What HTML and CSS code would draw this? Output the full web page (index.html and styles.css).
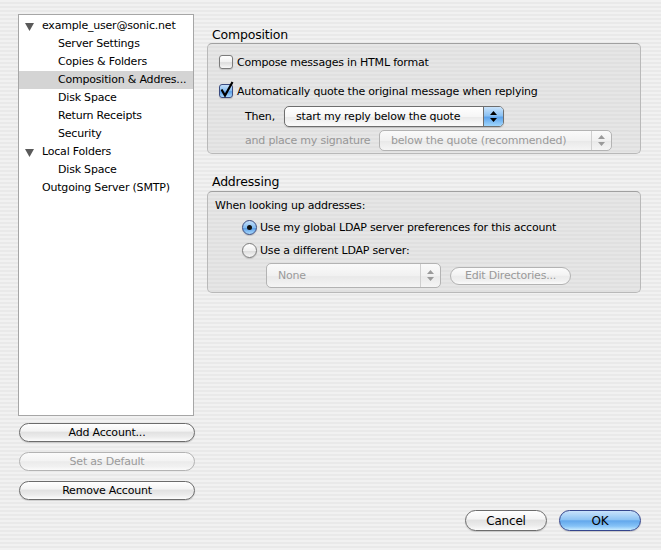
FILE: index.html
```html
<!DOCTYPE html>
<html>
<head>
    <title>Account Settings</title>
    <link rel="stylesheet" href="styles.css">
</head>
<body>
<div class="window">
    <div class="panes">

        <!-- Account tree + account buttons -->
        <div class="sidebar">
            <ul class="tree">
                <li class="tree-row top"><span class="disclosure"><svg width="9" height="8" viewBox="0 0 9 8"><path d="M0 0 H9 L4.5 8 Z" fill="#5a5a5a"/></svg></span>example_user@sonic.net</li>
                <li class="tree-row child">Server Settings</li>
                <li class="tree-row child">Copies &amp; Folders</li>
                <li class="tree-row child selected">Composition &amp; Addres...</li>
                <li class="tree-row child">Disk Space</li>
                <li class="tree-row child">Return Receipts</li>
                <li class="tree-row child">Security</li>
                <li class="tree-row top"><span class="disclosure"><svg width="9" height="8" viewBox="0 0 9 8"><path d="M0 0 H9 L4.5 8 Z" fill="#5a5a5a"/></svg></span>Local Folders</li>
                <li class="tree-row child">Disk Space</li>
                <li class="tree-row top">Outgoing Server (SMTP)</li>
            </ul>
            <div class="account-actions">
                <button class="btn">Add Account...</button>
                <button class="btn" disabled>Set as Default</button>
                <button class="btn">Remove Account</button>
            </div>
        </div>

        <!-- Settings for the selected page -->
        <div class="main">
            <div class="group">
                <div class="group-title">Composition</div>
                <div class="group-box composition">
                    <label class="check-row">
                        <span class="checkbox"></span>
                        Compose messages in HTML format
                    </label>
                    <label class="check-row second">
                        <span class="checkbox checked"><svg width="16" height="17" viewBox="0 0 16 17"><path d="M2.5 8.5 L6 14.5 L13.5 1" fill="none" stroke="#000" stroke-width="2.2" stroke-linejoin="miter"/></svg></span>
                        Automatically quote the original message when replying
                    </label>
                    <div class="option-row then-row">
                        <span class="then-label">Then,</span>
                        <div class="popup popup-reply">
                            <span class="popup-text">start my reply below the quote</span>
                            <span class="popup-arrows"><svg width="7" height="11" viewBox="0 0 7 11"><path d="M3.5 0 L7 4 H0 Z M0 7 H7 L3.5 11 Z" fill="#000"/></svg></span>
                        </div>
                    </div>
                    <div class="option-row sig-row">
                        <span class="sig-label">and place my signature</span>
                        <div class="popup disabled popup-sig">
                            <span class="popup-text">below the quote (recommended)</span>
                            <span class="popup-arrows"><svg width="7" height="11" viewBox="0 0 7 11"><path d="M3.5 0 L7 4 H0 Z M0 7 H7 L3.5 11 Z" fill="#9a9a9a"/></svg></span>
                        </div>
                    </div>
                </div>
            </div>

            <div class="group">
                <div class="group-title">Addressing</div>
                <div class="group-box addressing">
                    <div class="plain-row">When looking up addresses:</div>
                    <label class="radio-row">
                        <span class="radio on"></span>
                        Use my global LDAP server preferences for this account
                    </label>
                    <label class="radio-row">
                        <span class="radio"></span>
                        Use a different LDAP server:
                    </label>
                    <div class="ldap-row">
                        <div class="popup disabled popup-none">
                            <span class="popup-text">None</span>
                            <span class="popup-arrows"><svg width="7" height="11" viewBox="0 0 7 11"><path d="M3.5 0 L7 4 H0 Z M0 7 H7 L3.5 11 Z" fill="#9a9a9a"/></svg></span>
                        </div>
                        <button class="btn small" disabled>Edit Directories...</button>
                    </div>
                </div>
            </div>
        </div>
    </div>

    <div class="footer">
        <button class="btn dialog">Cancel</button>
        <button class="btn dialog default">OK</button>
    </div>
</div>
</body>
</html>
```

FILE: styles.css
```css
/* Aqua pinstripe window */
body {
    margin: 0;
    font-family: "Lucida Grande", "DejaVu Sans", sans-serif;
    font-size: 11px;
    letter-spacing: -0.2px;
    color: #000;
    background: repeating-linear-gradient(to bottom, #f1f1f1 0, #f1f1f1 2px, #e9e9e9 2px, #e9e9e9 4px);
}

.window {
    display: flex;
    flex-direction: column;
    width: 661px;
    height: 550px;
}

.panes {
    display: flex;
    padding: 14px 20px 0 18px;
}

/* Sidebar */
.sidebar {
    width: 178px;
    display: flex;
    flex-direction: column;
}

.tree {
    list-style: none;
    margin: 0;
    padding: 2px 0 0 0;
    width: 174px;
    height: 398px;
    border: 1px solid #a6a6a6;
    background: #fff;
}

.tree-row {
    height: 18px;
    line-height: 18px;
    white-space: nowrap;
    overflow: hidden;
}

.tree-row.top {
    padding-left: 23px;
    position: relative;
}

.tree-row.child {
    padding-left: 39px;
}

.tree-row.selected {
    background: #d4d4d4;
}

.disclosure {
    position: absolute;
    left: 6px;
    top: 6px;
    line-height: 0;
}

.account-actions {
    display: flex;
    flex-direction: column;
    gap: 10px;
    margin-top: 7px;
    padding-left: 1px;
}

/* Push buttons */
.btn {
    font-family: inherit;
    font-size: 11px;
    letter-spacing: -0.2px;
    height: 19px;
    padding: 0;
    border: 1px solid #6c6c6c;
    border-radius: 10px;
    color: #000;
    background: linear-gradient(to bottom, #ffffff 0%, #f4f4f4 40%, #e2e2e2 50%, #ebebeb 75%, #fcfcfc 100%);
    box-shadow: 0 1px 1px rgba(0, 0, 0, 0.15);
}

.account-actions .btn {
    width: 176px;
}

.btn:disabled {
    color: #9a9a9a;
    border-color: #b3b3b3;
    background: linear-gradient(to bottom, #fbfbfb 0%, #f3f3f3 45%, #ebebeb 52%, #f1f1f1 80%, #fbfbfb 100%);
    box-shadow: none;
}

.btn.small {
    width: 121px;
    height: 18px;
}

.btn.dialog {
    width: 82px;
    height: 21px;
    border-radius: 11px;
    font-size: 12px;
}

.btn.default {
    border-color: #34458c;
    background: linear-gradient(to bottom, #c9e3fb 0%, #8fc4f3 45%, #63a8ec 52%, #86c3f7 80%, #c8ecff 100%);
}

/* Right pane */
.main {
    flex: 1;
    margin-left: 11px;
}

.group-title {
    font-size: 12.5px;
    line-height: 16px;
    padding: 13px 0 0 5px;
}

.group + .group .group-title {
    padding-top: 20px;
    padding-bottom: 1px;
}

.group-box {
    border: 1px solid #b9b9b9;
    border-top-color: #a0a0a0;
    border-radius: 5px;
    background: repeating-linear-gradient(to bottom, #e6e6e6 0, #e6e6e6 2px, #e0e0e0 2px, #e0e0e0 4px);
}

.composition {
    height: 100px;
    padding: 9px 0 0 11px;
}

.addressing {
    height: 96px;
    padding: 4px 0 0 7px;
}

.check-row,
.radio-row,
.plain-row {
    display: flex;
    align-items: center;
    height: 18px;
    gap: 4px;
}

.check-row.second {
    margin-top: 11px;
}

.checkbox {
    position: relative;
    width: 12px;
    height: 12px;
    border: 1px solid #7b7b7b;
    border-radius: 3px;
    background: linear-gradient(to bottom, #ffffff, #f0f0f0 50%, #dcdcdc 55%, #f7f7f7);
    box-shadow: 0 1px 1px rgba(0, 0, 0, 0.15);
}

.checkbox.checked {
    border-color: #3b4c80;
    background: linear-gradient(to bottom, #c6e0fa, #84bcf0 50%, #5b9ee8 55%, #a9d9fb);
}

.checkbox svg {
    position: absolute;
    left: -1px;
    top: -4px;
}

.option-row {
    display: flex;
    align-items: center;
    padding-left: 26px;
}

.then-row {
    margin-top: 6px;
}

.sig-row {
    margin-top: 3px;
}

.then-label {
    width: 39px;
    flex: none;
}

.sig-label {
    width: 134px;
    flex: none;
    color: #979797;
}

/* Pop-up menus */
.popup {
    display: flex;
    height: 19px;
    border: 1px solid #6e6e6e;
    border-radius: 5px;
    background: linear-gradient(to bottom, #ffffff, #f6f6f6 50%, #ebebeb 55%, #fbfbfb);
    box-shadow: 0 1px 1px rgba(0, 0, 0, 0.15);
    overflow: hidden;
}

.popup-text {
    flex: 1;
    line-height: 19px;
    padding-left: 11px;
    white-space: nowrap;
}

.popup-arrows {
    width: 19px;
    display: flex;
    align-items: center;
    justify-content: center;
    border-left: 1px solid #6e6e6e;
    background: linear-gradient(to bottom, #c9e3fb, #8cc2f3 45%, #5ea4ec 55%, #9fd6fd);
}

.popup-reply {
    width: 218px;
}

.popup.disabled {
    border-color: #b3b3b3;
    box-shadow: none;
    background: linear-gradient(to bottom, #fafafa, #f1f1f1 50%, #e9e9e9 55%, #f5f5f5);
}

.popup.disabled .popup-text {
    color: #9a9a9a;
}

.popup.disabled .popup-arrows {
    border-left-color: #cfcfcf;
    background: none;
}

.popup-sig {
    width: 231px;
}

.radio-row {
    padding-left: 27px;
    gap: 3px;
}

.radio-row + .radio-row {
    margin-top: 5px;
}

.plain-row + .radio-row {
    margin-top: 4px;
}

.radio {
    position: relative;
    width: 13px;
    height: 13px;
    border: 1px solid #7b7b7b;
    border-radius: 50%;
    background: linear-gradient(to bottom, #ffffff, #f0f0f0 50%, #dcdcdc 55%, #f7f7f7);
    box-shadow: 0 1px 1px rgba(0, 0, 0, 0.15);
}

.radio.on {
    border-color: #3b4c80;
    background: linear-gradient(to bottom, #c6e0fa, #84bcf0 50%, #5b9ee8 55%, #a9d9fb);
}

.radio.on::after {
    content: "";
    position: absolute;
    left: 4px;
    top: 4px;
    width: 5px;
    height: 5px;
    border-radius: 50%;
    background: #111;
}

.ldap-row {
    display: flex;
    align-items: center;
    gap: 9px;
    margin-top: 4px;
    padding-left: 51px;
}

.popup-none {
    width: 173px;
    height: 23px;
}

.popup-none .popup-text {
    line-height: 23px;
}

/* Dialog buttons */
.footer {
    margin-top: auto;
    display: flex;
    justify-content: flex-end;
    gap: 12px;
    padding: 0 20px 19px 0;
}
```
